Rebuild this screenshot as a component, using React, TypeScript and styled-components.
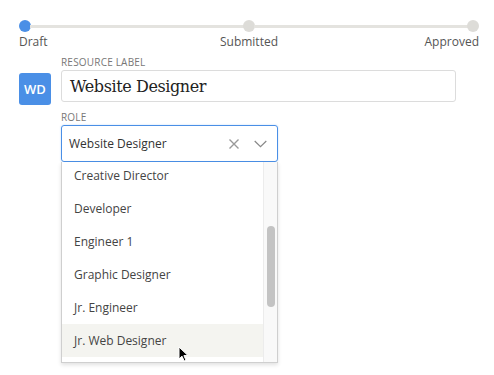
import React, { useLayoutEffect, useRef } from "react";
import styled, { createGlobalStyle } from "styled-components";

const GlobalStyle = createGlobalStyle`
  html, body { margin: 0; padding: 0; background: #fff; }
  body { font-family: "Open Sans", "Noto Sans", sans-serif; color: #444; }
  * { box-sizing: border-box; }
`;

const Page = styled.div`
  width: 494px;
  height: 375px;
  padding: 20px 16px 0 19px;
  overflow: hidden;
`;

const Stepper = styled.div`
  width: 460px;
`;

const Track = styled.div`
  display: flex;
  align-items: center;
  height: 12px;
`;

const Dot = styled.div<{ $active?: boolean }>`
  width: 12px;
  height: 12px;
  border-radius: 50%;
  flex: none;
  background: ${(p) => (p.$active ? "#4a8fe6" : "#dddcd8")};
`;

const Line = styled.div`
  flex: 1;
  height: 3px;
  margin: 0 -1px;
  background: #e4e3df;
`;

const StepLabels = styled.div`
  display: grid;
  grid-template-columns: 1fr 1fr 1fr;
  margin-top: 1px;
  font-size: 12px;
  line-height: 18px;
  color: #555;
`;

const StepLabel = styled.div<{ $align: "start" | "center" | "end" }>`
  text-align: ${(p) => (p.$align === "start" ? "left" : p.$align === "end" ? "right" : "center")};
`;

const Form = styled.div`
  display: grid;
  grid-template-columns: 32px 395px;
  column-gap: 10px;
  margin-top: 5px;
`;

const Avatar = styled.div`
  width: 32px;
  height: 32px;
  margin-top: 17px;
  border-radius: 3px;
  background: #4a8fe6;
  color: #fff;
  font-size: 13px;
  font-weight: 600;
  display: flex;
  align-items: center;
  justify-content: center;
`;

const Fields = styled.div`
  display: flex;
  flex-direction: column;
`;

const FieldLabel = styled.div<{ $gap?: number }>`
  font-size: 10px;
  line-height: 12px;
  color: #777;
  letter-spacing: 0.2px;
  text-transform: uppercase;
  margin-top: ${(p) => p.$gap ?? 0}px;
  margin-bottom: 2px;
`;

const TextInput = styled.div`
  height: 32px;
  border: 1px solid #dcdcdc;
  border-radius: 3px;
  padding: 0 8px;
  display: flex;
  align-items: center;
  font-family: "DejaVu Serif", "Liberation Serif", serif;
  font-size: 16px;
  letter-spacing: -0.4px;
  color: #222;
`;

const SelectWrap = styled.div`
  position: relative;
  width: 217px;
`;

const SelectBox = styled.div`
  height: 37px;
  border: 1px solid #4a8fe6;
  border-radius: 3px;
  box-shadow: 0 0 2px rgba(74, 143, 230, 0.35);
  display: flex;
  align-items: center;
  padding: 0 10px 0 7px;
  font-size: 12px;
  color: #333;
`;

const SelectValue = styled.div`
  flex: 1;
`;

const IconButton = styled.span<{ $ml?: number }>`
  display: flex;
  align-items: center;
  margin-left: ${(p) => p.$ml ?? 0}px;
`;

const Menu = styled.div`
  position: absolute;
  left: 0;
  right: 0;
  top: 100%;
  height: 201px;
  display: flex;
  border: 1px solid #cfcfcf;
  border-top: none;
  background: #fff;
  box-shadow: 0 2px 4px rgba(0, 0, 0, 0.12);
  z-index: 2;
`;

const Viewport = styled.div`
  flex: 1;
  overflow: hidden;
`;

const ScrollTrack = styled.div`
  position: relative;
  width: 14px;
  flex: none;
  background: #f9f9f9;
  border-left: 1px solid #ececec;
`;

const Thumb = styled.div`
  position: absolute;
  left: 3px;
  width: 8px;
  border-radius: 4px;
  background: #c3c3c3;
`;

const Option = styled.div<{ $active?: boolean }>`
  height: 33px;
  display: flex;
  align-items: center;
  padding-left: 12px;
  font-size: 12px;
  color: #444;
  background: ${(p) => (p.$active ? "#f4f4f0" : "#fff")};
`;

const Cursor = styled.svg`
  position: absolute;
  left: 117px;
  top: 221px;
  z-index: 3;
`;

const options = [
  "Account Director",
  "Account Manager",
  "Art Director",
  "Content Strategist",
  "Copywriter",
  "Creative Director",
  "Developer",
  "Engineer 1",
  "Graphic Designer",
  "Jr. Engineer",
  "Jr. Web Designer",
  "Marketing Manager",
  "Project Manager",
  "Senior Developer",
  "UX Designer",
];

const ITEM_H = 33;
const VIEW_H = 200;
const SCROLL_TOP = 168;

export default function App() {
  const menuRef = useRef<HTMLDivElement>(null);
  useLayoutEffect(() => {
    if (menuRef.current) menuRef.current.scrollTop = SCROLL_TOP;
  }, []);

  const total = options.length * ITEM_H;
  const thumbH = (VIEW_H / total) * VIEW_H;
  const thumbTop = (SCROLL_TOP / total) * VIEW_H - 4;

  return (
    <>
      <GlobalStyle />
      <Page>
        <Stepper>
          <Track>
            <Dot $active />
            <Line />
            <Dot />
            <Line />
            <Dot />
          </Track>
          <StepLabels>
            <StepLabel $align="start">Draft</StepLabel>
            <StepLabel $align="center">Submitted</StepLabel>
            <StepLabel $align="end">Approved</StepLabel>
          </StepLabels>
        </Stepper>
        <Form>
          <Avatar>WD</Avatar>
          <Fields>
            <FieldLabel>Resource Label</FieldLabel>
            <TextInput>Website Designer</TextInput>
            <FieldLabel $gap={9}>Role</FieldLabel>
            <SelectWrap>
              <SelectBox>
                <SelectValue>Website Designer</SelectValue>
                <IconButton>
                  <svg width="12" height="12" viewBox="0 0 12 12">
                    <path d="M1.5 1.5 L10.5 10.5 M10.5 1.5 L1.5 10.5" stroke="#999" strokeWidth="1.4" fill="none" />
                  </svg>
                </IconButton>
                <IconButton $ml={14}>
                  <svg width="13" height="8" viewBox="0 0 13 8">
                    <path d="M0.7 1 L6.5 6.6 L12.3 1" stroke="#888" strokeWidth="1.2" fill="none" />
                  </svg>
                </IconButton>
              </SelectBox>
              <Menu>
                <Viewport ref={menuRef}>
                  {options.map((o) => (
                    <Option key={o} $active={o === "Jr. Web Designer"}>
                      {o}
                    </Option>
                  ))}
                </Viewport>
                <ScrollTrack>
                  <Thumb style={{ top: thumbTop, height: thumbH }} />
                </ScrollTrack>
              </Menu>
              <Cursor width="12" height="16" viewBox="0 0 12 16">
                <path d="M1 1 L1 13 L4 10.2 L6.2 15 L8 14.2 L5.9 9.6 L10 9.6 Z" fill="#000" stroke="#fff" strokeWidth="1" strokeLinejoin="round" />
              </Cursor>
            </SelectWrap>
          </Fields>
        </Form>
      </Page>
    </>
  );
}
